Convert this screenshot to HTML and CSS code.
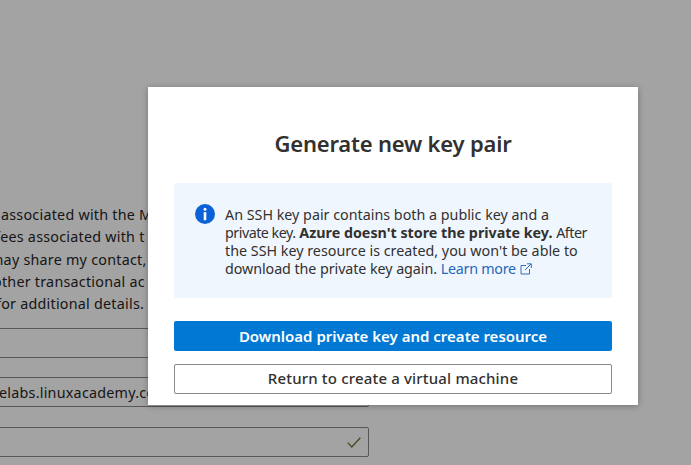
FILE: index.html
```html
<!DOCTYPE html>
<html lang="en">
<head>
<meta charset="utf-8">
<title>Generate new key pair</title>
<link rel="stylesheet" href="styles.css">
</head>
<body>
<main class="page">
  <div class="terms">
    <div class="terms-line l1">associated with the M</div>
    <div class="terms-line l2">fees associated with t</div>
    <div class="terms-line l3">may share my contact,</div>
    <div class="terms-line l4">other transactional ac</div>
    <div class="terms-line l5">for additional details.</div>
  </div>
  <div class="field field-first"></div>
  <div class="field field-text">elabs.linuxacademy.co</div>
  <div class="field field-check">
    <svg class="check" width="14" height="11" viewBox="0 0 14 11" aria-hidden="true"><path d="M0.7 5.6 L4.8 10 L13.3 0.7" fill="none" stroke="#5f7a32" stroke-width="1.3"/></svg>
  </div>
</main>
<div class="scrim"></div>
<section class="modal">
  <h1 class="title">Generate new key pair</h1>
  <div class="info">
    <svg class="info-icon" width="20" height="20" viewBox="0 0 20 20" aria-hidden="true">
      <circle cx="10" cy="10" r="10" fill="#0b62d6"/>
      <circle cx="10" cy="5.3" r="1.5" fill="#fff"/>
      <rect x="8.7" y="8.2" width="2.6" height="8" fill="#fff"/>
    </svg>
    <p class="info-text">An SSH key pair contains both a public key and a <span class="tight">private key.</span> <strong>Azure doesn't store the private key.</strong> <span class="tight">After</span> the SSH key resource is created, you won't be able to <span class="snug">download the private key again.</span> <a class="link" href="#">Learn more<svg class="ext" width="12" height="12" viewBox="0 0 12 12" aria-hidden="true"><path d="M6 2.5H1V11H9.5V6M7 0.8H11.3V5M11 1 L5 7" fill="none" stroke="#2f6fc0" stroke-width="1"/></svg></a></p>
  </div>
  <button class="btn btn-primary" type="button">Download private key and create resource</button>
  <button class="btn btn-secondary" type="button">Return to create a virtual machine</button>
</section>
</body>
</html>
```
FILE: styles.css
```css
* { box-sizing: border-box; }
html, body { margin: 0; height: 100%; }
body {
  width: 691px;
  height: 465px;
  overflow: hidden;
  position: relative;
  background: #fff;
  font-family: "Noto Sans", "Open Sans", sans-serif;
  color: #262524;
}
.page {
  width: 379px;
  margin-left: -10px;
  padding-top: 204px;
}
.terms { font-size: 14.3px; line-height: 22.25px; white-space: nowrap; letter-spacing: 0.25px; }
.l1 { margin-left: 11px; }
.l2 { margin-left: 5px; }
.l3 { margin-left: 0; }
.l4 { margin-left: 3px; }
.l5 { margin-left: 6px; }
.field {
  height: 30px;
  border: 1px solid #8a8886;
  border-radius: 2px;
  display: flex;
  align-items: center;
  font-size: 14.3px;
  letter-spacing: 0.25px;
  white-space: nowrap;
}
.field-first { margin-top: 13px; }
.field-text { margin-top: 19px; padding-left: 8px; overflow: hidden; }
.field-check { margin-top: 20px; justify-content: flex-end; padding-right: 7px; }
.scrim {
  position: absolute;
  inset: 0;
  background: rgba(0, 0, 0, 0.36);
}
.modal {
  position: absolute;
  left: 148px;
  top: 87px;
  width: 490px;
  height: 318px;
  background: #fff;
  padding: 42px 26px 0;
  box-shadow: 0 1px 6px rgba(0, 0, 0, 0.3);
  display: flex;
  flex-direction: column;
}
.title {
  margin: 0;
  font-size: 22px;
  line-height: 28px;
  font-weight: 600;
  text-align: center;
  color: #323130;
  letter-spacing: -0.2px;
}
.info {
  margin-top: 26px;
  height: 115px;
  background: #f0f6fe;
  border-radius: 2px;
  padding: 21px 20px 0 21px;
  display: flex;
  gap: 10px;
}
.info-icon { flex: none; }
.info-text {
  margin: 2px 0 0;
  width: 370px;
  flex: none;
  font-size: 14.3px;
  line-height: 18px;
  color: #323130;
}
.info-text strong { font-weight: 700; }
.tight { letter-spacing: -0.5px; }
.snug { letter-spacing: -0.07px; }
.link { color: #2568b8; text-decoration: none; letter-spacing: -0.25px; }
.ext { margin-left: 4px; vertical-align: -1px; }
.btn {
  height: 30px;
  width: 438px;
  border-radius: 2px;
  font-family: inherit;
  font-size: 15px;
  font-weight: 600;
  padding: 0;
}
.btn-primary {
  margin-top: 23px;
  background: #0078d4;
  border: none;
  color: #fff;
}
.btn-secondary {
  margin-top: 13px;
  background: #fff;
  border: 1px solid #8a8886;
  color: #323130;
  font-weight: 500;
  letter-spacing: 0.17px;
  padding-bottom: 2px;
}
```
